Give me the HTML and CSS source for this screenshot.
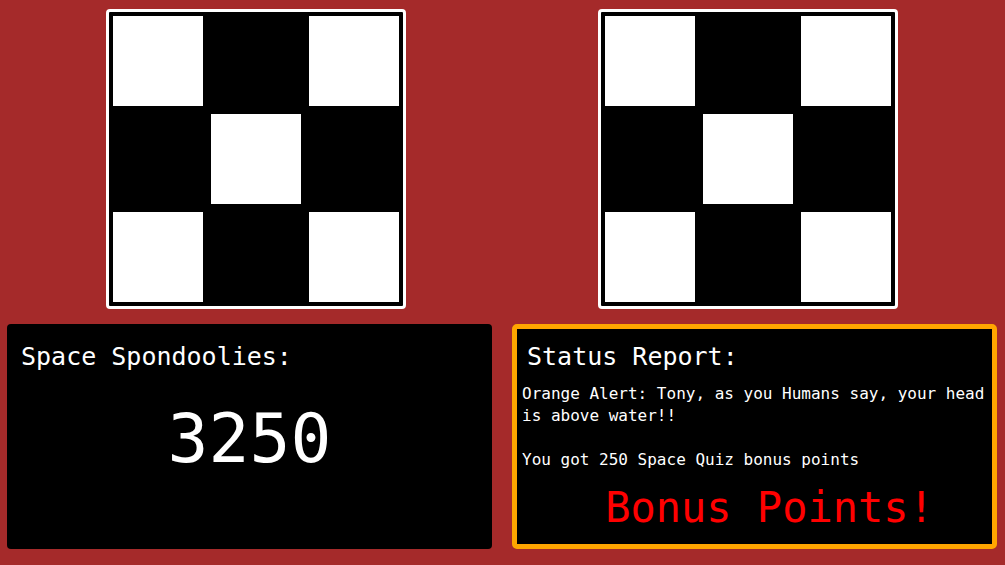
FILE: index.html
```html
<!DOCTYPE html>
<html lang="en">
<head>
<meta charset="utf-8">
<title>Space Quiz</title>
<link rel="stylesheet" href="styles.css">
</head>
<body>
<main class="game">
  <section class="boards">
    <div class="board">
      <div class="cell on"></div><div class="cell"></div><div class="cell on"></div>
      <div class="cell"></div><div class="cell on"></div><div class="cell"></div>
      <div class="cell on"></div><div class="cell"></div><div class="cell on"></div>
    </div>
    <div class="board">
      <div class="cell on"></div><div class="cell"></div><div class="cell on"></div>
      <div class="cell"></div><div class="cell on"></div><div class="cell"></div>
      <div class="cell on"></div><div class="cell"></div><div class="cell on"></div>
    </div>
  </section>
  <section class="panels">
    <div class="panel score">
      <h2 class="panel-title">Space Spondoolies:</h2>
      <div class="score-value">3250</div>
    </div>
    <div class="panel status">
      <h2 class="panel-title status-title">Status Report:</h2>
      <p class="status-text">Orange Alert: Tony, as you Humans say, your head is above water!!<br><br>You got 250 Space Quiz bonus points</p>
      <div class="bonus">Bonus Points!</div>
    </div>
  </section>
</main>
</body>
</html>
```
FILE: styles.css
```css
html, body {
  margin: 0;
  padding: 0;
}
body {
  background: #a52a2a;
  font-family: "DejaVu Sans Mono", "Liberation Mono", monospace;
  color: #ffffff;
  width: 1005px;
  height: 565px;
  overflow: hidden;
}
.game {
  display: flex;
  flex-direction: column;
}
.boards {
  display: flex;
  gap: 192px;
  padding: 9px 0 0 106px;
}
.board {
  box-sizing: border-box;
  width: 300px;
  height: 300px;
  border: 3px solid #ffffff;
  border-radius: 4px;
  background: #000000;
  padding: 4px;
  display: grid;
  grid-template-columns: repeat(3, 90px);
  grid-auto-rows: 90px;
  gap: 8px;
}
.cell {
  background: #000000;
}
.cell.on {
  background: #ffffff;
}
.panels {
  display: grid;
  grid-template-columns: 485px 485px;
  gap: 20px;
  margin: 15px 0 0 7px;
}
.panel {
  box-sizing: border-box;
  height: 225px;
  background: #000000;
  border-radius: 4px;
}
.panel-title {
  margin: 0;
  font-size: 25px;
  font-weight: normal;
  line-height: 30px;
}
.score {
  padding: 18px 14px 0 14px;
}
.score-value {
  margin-top: 27px;
  font-size: 68px;
  line-height: 80px;
  text-align: center;
}
.status {
  border: 5px solid #ffa500;
  border-radius: 5px;
  padding: 13px 5px 0 5px;
}
.status-title {
  padding-left: 5px;
}
.status-text {
  margin: 11px 0 0 0;
  font-size: 16px;
  line-height: 22px;
}
.bonus {
  margin-top: 12px;
  padding-left: 30px;
  font-size: 42px;
  line-height: 50px;
  text-align: center;
  color: #ff0000;
}
```
